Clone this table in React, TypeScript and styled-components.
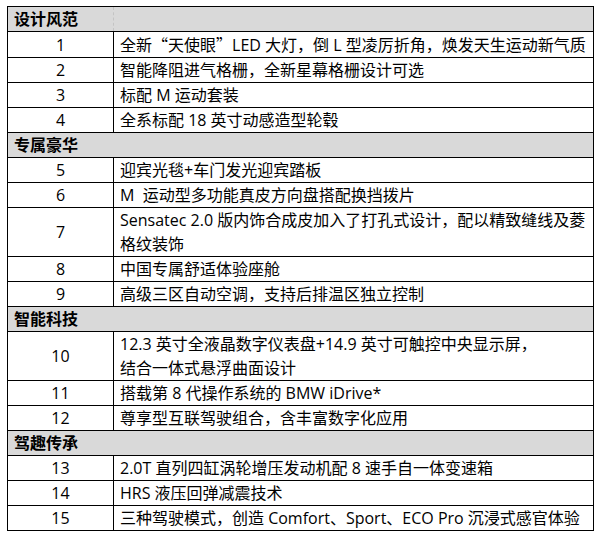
import React from "react";
import styled, { createGlobalStyle } from "styled-components";

const Global = createGlobalStyle`
  html, body { margin: 0; padding: 0; background: #ffffff; }
  body { font-family: "Open Sans", "Noto Sans CJK SC", sans-serif; color: #000; }
`;

const Page = styled.div`
  padding: 6px 0 0 7px;
`;

const Table = styled.table`
  width: 586px;
  border-collapse: collapse;
  table-layout: fixed;
  border: 1px solid #000;
`;

const NumCol = styled.col`
  width: 106px;
`;

const TextCol = styled.col`
  width: 480px;
`;

const HeaderCell = styled.td<{ $divider?: boolean }>`
  background: #d9d9d9;
  height: 24px;
  padding: 0 0 0 6px;
  font-size: 16px;
  font-weight: 700;
  line-height: 24px;
  border-top: 1px solid #000;
  border-bottom: 1px solid #000;
  border-right: ${(p) => (p.$divider ? "1px dashed #c4c4c4" : "none")};
  white-space: nowrap;
  vertical-align: middle;
`;

const NumCell = styled.td<{ $lines: number }>`
  height: ${(p) => p.$lines * 24}px;
  border: 1px solid #000;
  text-align: center;
  font-size: 16px;
  line-height: 24px;
  padding: 0;
  vertical-align: middle;
`;

const TextCell = styled.td`
  border: 1px solid #000;
  padding: 0 0 0 6px;
  font-size: 16px;
  line-height: 24px;
  white-space: nowrap;
  vertical-align: middle;
`;

const Cjk = styled.span`
  font-family: "Noto Sans CJK SC", sans-serif;
`;

type Item = { n: number; lines: React.ReactNode[] };
type Section = { title: string; items: Item[] };

const sections: Section[] = [
  {
    title: "设计风范",
    items: [
      {
        n: 1,
        lines: [
          <>
            全新<Cjk>“</Cjk>天使眼<Cjk>”</Cjk>LED 大灯，倒 L 型凌厉折角，焕发天生运动新气质
          </>,
        ],
      },
      { n: 2, lines: ["智能降阻进气格栅，全新星幕格栅设计可选"] },
      { n: 3, lines: ["标配 M 运动套装"] },
      { n: 4, lines: ["全系标配 18 英寸动感造型轮毂"] },
    ],
  },
  {
    title: "专属豪华",
    items: [
      { n: 5, lines: ["迎宾光毯+车门发光迎宾踏板"] },
      { n: 6, lines: ["M\u00a0 运动型多功能真皮方向盘搭配换挡拨片"] },
      { n: 7, lines: ["Sensatec 2.0 版内饰合成皮加入了打孔式设计，配以精致缝线及菱", "格纹装饰"] },
      { n: 8, lines: ["中国专属舒适体验座舱"] },
      { n: 9, lines: ["高级三区自动空调，支持后排温区独立控制"] },
    ],
  },
  {
    title: "智能科技",
    items: [
      { n: 10, lines: ["12.3 英寸全液晶数字仪表盘+14.9 英寸可触控中央显示屏，", "结合一体式悬浮曲面设计"] },
      { n: 11, lines: ["搭载第 8 代操作系统的 BMW iDrive*"] },
      { n: 12, lines: ["尊享型互联驾驶组合，含丰富数字化应用"] },
    ],
  },
  {
    title: "驾趣传承",
    items: [
      { n: 13, lines: ["2.0T 直列四缸涡轮增压发动机配 8 速手自一体变速箱"] },
      { n: 14, lines: ["HRS 液压回弹减震技术"] },
      { n: 15, lines: ["三种驾驶模式，创造 Comfort、Sport、ECO Pro 沉浸式感官体验"] },
    ],
  },
];

export default function App() {
  return (
    <Page>
      <Global />
      <Table>
        <colgroup>
          <NumCol />
          <TextCol />
        </colgroup>
        <tbody>
          {sections.map((s, si) => (
            <React.Fragment key={s.title}>
              <tr>
                <HeaderCell $divider={si === 0}>{s.title}</HeaderCell>
                <HeaderCell />
              </tr>
              {s.items.map((it) => (
                <tr key={it.n}>
                  <NumCell $lines={it.lines.length}>{it.n}</NumCell>
                  <TextCell>
                    {it.lines.map((l, i) => (
                      <React.Fragment key={i}>
                        {i > 0 && <br />}
                        {l}
                      </React.Fragment>
                    ))}
                  </TextCell>
                </tr>
              ))}
            </React.Fragment>
          ))}
        </tbody>
      </Table>
    </Page>
  );
}
